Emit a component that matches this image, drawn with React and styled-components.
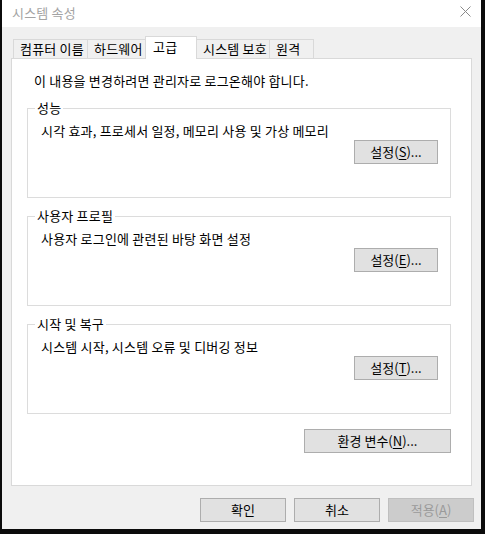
import React from "react";
import styled, { createGlobalStyle } from "styled-components";

const GlobalStyle = createGlobalStyle`
  html, body { margin: 0; padding: 0; background: #0b0b0b; }
  body { font-family: "Noto Sans CJK KR", "Noto Sans", sans-serif; }
`;

const tabs = [
  { label: "컴퓨터 이름", w: 75 },
  { label: "하드웨어", w: 59 },
  { label: "고급", w: 52, active: true },
  { label: "시스템 보호", w: 74 },
  { label: "원격", w: 45 },
];

const groups = [
  { title: "성능", desc: "시각 효과, 프로세서 일정, 메모리 사용 및 가상 메모리", key: "S" },
  { title: "사용자 프로필", desc: "사용자 로그인에 관련된 바탕 화면 설정", key: "E" },
  { title: "시작 및 복구", desc: "시스템 시작, 시스템 오류 및 디버깅 정보", key: "T" },
];

const App = () => {
  return (
    <>
      <GlobalStyle />
      <Screen>
        <Window>
          <TitleBar>
            <Title>시스템 속성</Title>
            <CloseIcon width="11" height="11" viewBox="0 0 11 11">
              <path d="M0.5 0.5 L10.5 10.5 M10.5 0.5 L0.5 10.5" stroke="#8a8a8a" strokeWidth="1" fill="none" />
            </CloseIcon>
          </TitleBar>
          <Body>
            <TabRow>
              {tabs.map((t) => (
                <Tab key={t.label} $w={t.w} $active={t.active}>
                  {t.label}
                </Tab>
              ))}
            </TabRow>
            <Panel>
              <Notice>이 내용을 변경하려면 관리자로 로그온해야 합니다.</Notice>
              {groups.map((g) => (
                <Group key={g.title}>
                  <Legend>{g.title}</Legend>
                  <Desc>{g.desc}</Desc>
                  <GroupFoot>
                    <Button>
                      설정(<u>{g.key}</u>)...
                    </Button>
                  </GroupFoot>
                </Group>
              ))}
              <EnvRow>
                <Button $wide>
                  환경 변수(<u>N</u>)...
                </Button>
              </EnvRow>
            </Panel>
            <Footer>
              <Button $footer>확인</Button>
              <Button $footer>취소</Button>
              <Button $footer disabled>
                적용(<u>A</u>)
              </Button>
            </Footer>
          </Body>
        </Window>
      </Screen>
    </>
  );
};

export default App;

const Screen = styled.div`
  width: 485px;
  height: 534px;
  box-sizing: border-box;
  padding: 0 4px 5px 2px;
  background: #0b0b0b;
  display: flex;
`;

const Window = styled.div`
  flex: 1;
  display: flex;
  flex-direction: column;
  background: #f0f0f0;
`;

const TitleBar = styled.div`
  height: 27px;
  background: #fff;
  display: flex;
  align-items: center;
  justify-content: space-between;
  padding: 0 10px 2px 10px;
  box-sizing: border-box;
`;

const Title = styled.span`
  font-size: 13px;
  letter-spacing: 0.2px;
  color: #a3a3a3;
`;

const CloseIcon = styled.svg`
  display: block;
  margin-top: -2px;
`;

const Body = styled.div`
  flex: 1;
  display: flex;
  flex-direction: column;
  padding: 9px 9px 0 9px;
`;

const TabRow = styled.div`
  display: flex;
  align-items: flex-end;
  height: 23px;
  padding-left: 2px;
  position: relative;
  z-index: 1;
  margin-bottom: -1px;
`;

const Tab = styled.div`
  box-sizing: border-box;
  width: ${(p) => p.$w}px;
  height: ${(p) => (p.$active ? 23 : 20)}px;
  margin-right: -1px;
  border: 1px solid #d9d9d9;
  border-bottom: ${(p) => (p.$active ? "none" : "1px solid #d9d9d9")};
  background: ${(p) => (p.$active ? "#fff" : "#f0f0f0")};
  font-size: 13px;
  letter-spacing: 0.2px;
  color: #000;
  padding: ${(p) => (p.$active ? "1px 0 0 7px" : "0 0 0 6px")};
  line-height: 18px;
  white-space: nowrap;
`;

const Panel = styled.div`
  box-sizing: border-box;
  height: 428px;
  background: #fff;
  border: 1px solid #d9d9d9;
  padding: 13px 20px 0 15px;
  display: flex;
  flex-direction: column;
`;

const Notice = styled.div`
  font-size: 13px;
  letter-spacing: 0.2px;
  color: #000;
  padding-left: 7px;
  line-height: 18px;
  margin-bottom: 10px;
`;

const Group = styled.fieldset`
  margin: 0 0 10px 0;
  padding: 6px 12px 10px 12px;
  border: 1px solid #dcdcdc;
  min-inline-size: 0;
  height: 98px;
  box-sizing: border-box;
  display: flex;
  flex-direction: column;
`;

const Legend = styled.legend`
  font-size: 13px;
  letter-spacing: 0.2px;
  color: #000;
  padding: 0 2px;
  margin-left: -5px;
  line-height: 16px;
`;

const Desc = styled.div`
  font-size: 13px;
  letter-spacing: 0.2px;
  color: #000;
  line-height: 18px;
  padding-left: 1px;
`;

const GroupFoot = styled.div`
  margin-top: auto;
  display: flex;
  justify-content: flex-end;
`;

const EnvRow = styled.div`
  display: flex;
  justify-content: flex-end;
  margin-top: 5px;
`;

const Button = styled.button`
  box-sizing: border-box;
  width: ${(p) => (p.$wide ? 147 : p.$footer ? 86 : 84)}px;
  height: 24px;
  padding: 0;
  border: 1px solid ${(p) => (p.disabled ? "#bfbfbf" : "#adadad")};
  background: ${(p) => (p.disabled ? "#cccccc" : "#e1e1e1")};
  color: ${(p) => (p.disabled ? "#9a9a9a" : "#000")};
  font-family: "Noto Sans CJK KR", "Noto Sans", sans-serif;
  font-size: 13px;
  line-height: 20px;
  u {
    text-underline-offset: 2px;
  }
`;

const Footer = styled.div`
  display: flex;
  justify-content: flex-end;
  gap: 8px;
  padding: 12px 7px 0 0;
  margin-right: -9px;
`;
